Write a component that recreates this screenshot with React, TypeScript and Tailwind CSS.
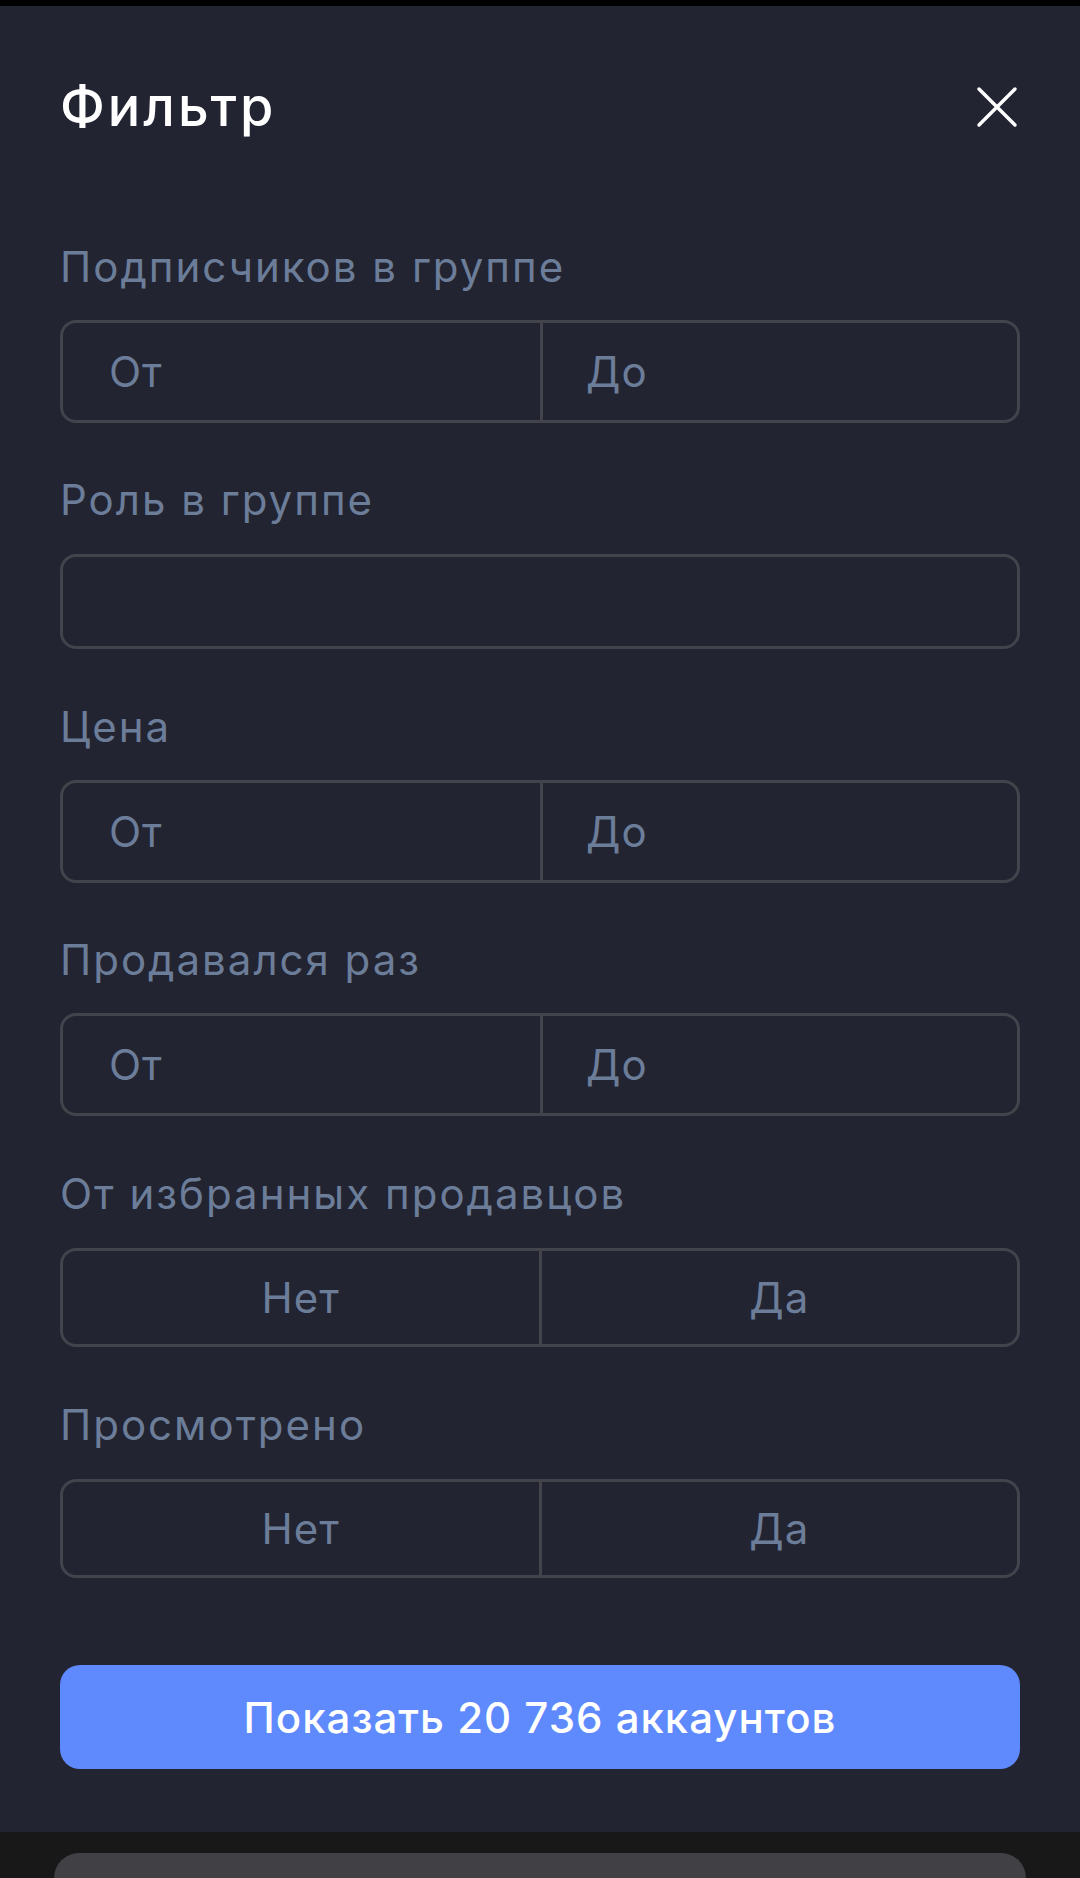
const font = { fontFamily: "Inter, 'Noto Sans', sans-serif" };

function Label({ children }: { children: string }) {
  return (
    <div className="h-[42px] text-[42px] leading-[42px] text-[#6c7d99] tracking-[2px]">
      {children}
    </div>
  );
}

function RangeField() {
  return (
    <div className="mt-[32px] flex h-[103px] rounded-[16px] border-[3px] border-[#42434b] text-[42px] tracking-[1px] text-[#6c7d99]">
      <div className="flex flex-1 items-center pl-[46px]">От</div>
      <div className="w-[3px] bg-[#42434b]" />
      <div className="flex flex-1 items-center pl-[43px]">До</div>
    </div>
  );
}

function ToggleField() {
  return (
    <div className="mt-[33px] flex h-[99px] rounded-[16px] border-[3px] border-[#42434b] text-[42px] tracking-[1px] text-[#6c7d99]">
      <div className="flex flex-1 items-center justify-center">Нет</div>
      <div className="w-[3px] bg-[#42434b]" />
      <div className="flex flex-1 items-center justify-center">Да</div>
    </div>
  );
}

function CloseIcon() {
  return (
    <svg width="44" height="44" viewBox="0 0 44 44" className="mr-[1px]">
      <path d="M4 4 L40 40 M40 4 L4 40" stroke="white" strokeWidth="3.5" strokeLinecap="round" />
    </svg>
  );
}

export default function App() {
  return (
    <div className="flex min-h-[1878px] w-full flex-col bg-[#222431]" style={font}>
      <div className="h-[6px] bg-black" />

      <div className="px-[60px]">
        <div className="mt-[74px] flex h-[54px] items-center justify-between">
          <h1 className="text-[54px] leading-[54px] font-medium tracking-[3px] text-white">Фильтр</h1>
          <CloseIcon />
        </div>

        <div className="mt-[112px]">
          <Label>Подписчиков в группе</Label>
          <RangeField />
        </div>

        <div className="mt-[56px]">
          <Label>Роль в группе</Label>
          <div className="mt-[33px] h-[95px] rounded-[16px] border-[3px] border-[#42434b]" />
        </div>

        <div className="mt-[57px]">
          <Label>Цена</Label>
          <RangeField />
        </div>

        <div className="mt-[56px]">
          <Label>Продавался раз</Label>
          <RangeField />
        </div>

        <div className="mt-[57px]">
          <Label>От избранных продавцов</Label>
          <ToggleField />
        </div>

        <div className="mt-[57px]">
          <Label>Просмотрено</Label>
          <ToggleField />
        </div>

        <button className="mt-[87px] flex h-[104px] w-full items-center justify-center rounded-[20px] bg-[#5e8afd] text-[42px] font-medium tracking-[1px] text-white">
          Показать 20 736 аккаунтов
        </button>
      </div>

      <div className="mt-[63px] flex h-[46px] flex-col bg-[#181818] px-[54px] pt-[21px]">
        <div className="flex-1 rounded-t-[48px] bg-[#414045]" />
      </div>
    </div>
  );
}
